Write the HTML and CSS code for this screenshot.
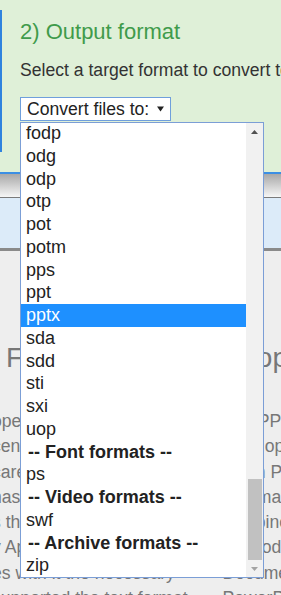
FILE: index.html
```html
<!doctype html>
<html>
    <head>
        <meta charset="utf-8">
        <link rel="stylesheet" href="styles.css">
    </head>
    <body>
        <div class="page">
            <section class="step">
                <h2>2) Output format</h2>
                <p class="hint">Select a target format to convert to:</p>
                <div class="picker">
                    <span>Convert files to:</span>
                    <svg width="7" height="6" viewBox="0 0 7 6"><polygon points="0,0.5 7,0.5 3.5,5.5" fill="#222"/></svg>
                </div>
            </section>
            <div class="toolbar"></div>
            <div class="infobar"></div>
            <div class="article">
                <div class="col col-left">
                    <h3>PPTX Files</h3>
                    <p>open Office XML format<br>cent versions of the<br>care of slides and<br>has replaced the PPT<br>s the older binary file<br>y Apple Keynote also<br>es with it the necessary<br>supported the text format</p>
                </div>
                <div class="col col-right">
                    <h3>Adoption</h3>
                    <p>The PPTX format was<br>is an open standard<br>Open PowerPoint XML<br>information about the<br>combined with other<br>methods and tools.<br>Document format used<br>PowerPoint since 2007.</p>
                </div>
            </div>

            <div class="dropdown">
                <ul class="options">
                    <li>fodp</li>
                    <li>odg</li>
                    <li>odp</li>
                    <li>otp</li>
                    <li>pot</li>
                    <li>potm</li>
                    <li>pps</li>
                    <li>ppt</li>
                    <li class="selected">pptx</li>
                    <li>sda</li>
                    <li>sdd</li>
                    <li>sti</li>
                    <li>sxi</li>
                    <li>uop</li>
                    <li class="group">-- Font formats --</li>
                    <li>ps</li>
                    <li class="group">-- Video formats --</li>
                    <li>swf</li>
                    <li class="group">-- Archive formats --</li>
                    <li>zip</li>
                </ul>
                <div class="scrollbar">
                    <div class="sb-btn">
                        <svg width="7" height="4" viewBox="0 0 7 4"><polygon points="0,4 3.5,0 7,4" fill="#505050"/></svg>
                    </div>
                    <div class="sb-track"><div class="sb-thumb"></div></div>
                    <div class="sb-btn">
                        <svg width="7" height="4" viewBox="0 0 7 4"><polygon points="0,0 7,0 3.5,4" fill="#a3a3a3"/></svg>
                    </div>
                </div>
            </div>
        </div>
    </body>
</html>
```

FILE: styles.css
```css
*{
    margin: 0;
    padding: 0;
    box-sizing: border-box;
}
body{
    background: #eee;
    font-family: "Liberation Sans", Arial, sans-serif;
    overflow: hidden;
}
.page{
    position: relative;
    width: 281px;
    height: 595px;
    overflow: hidden;
}

/* green step panel */
.step{
    position: relative;
    height: 174px;
    padding: 19px 0 0 20px;
    background: #dff0d8;
    border-bottom: 2px solid #3b8fe4;
}
.step::before{
    content: "";
    position: absolute;
    left: 0;
    top: 10px;
    width: 2px;
    height: 142px;
    background: #2f83de;
}
.step h2{
    font-size: 22px;
    line-height: 25px;
    font-weight: normal;
    color: #3f9b4b;
}
.hint{
    margin-top: 16px;
    font-size: 17.6px;
    line-height: 20px;
    color: #333;
    white-space: nowrap;
}
.picker{
    display: flex;
    align-items: center;
    gap: 8px;
    margin-top: 17px;
    width: 151px;
    height: 24px;
    padding-left: 6px;
    background: #fff;
    border: 1px solid #6f9fdc;
    font-size: 17.6px;
    color: #222;
}

/* bars under the panel */
.toolbar{
    height: 24px;
    background: linear-gradient(#a8a8a8, #f6f6f6);
    border-bottom: 1px solid #7a7a7a;
}
.infobar{
    height: 53px;
    background: #dcebf9;
    border-bottom: 3px solid #8a8a8a;
}

/* text behind the dropdown */
.article{
    display: flex;
    gap: 35px;
    padding-top: 92px;
}
.col-left{
    flex: 0 0 190px;
    margin-left: -8px;
}
.col-right{
    flex: 0 0 auto;
}
.col h3{
    font-size: 28px;
    line-height: 30px;
    font-weight: normal;
    color: #777;
    white-space: nowrap;
}
.col-left h3{
    margin-left: -67px;
}
.col p{
    margin-top: 36px;
    font-size: 17.6px;
    line-height: 25.3px;
    color: #777;
    white-space: nowrap;
}

/* open select list */
.dropdown{
    position: absolute;
    left: 20px;
    top: 122px;
    width: 244px;
    height: 456px;
    display: flex;
    background: #fff;
    border: 1px solid #7b9ed6;
}
.options{
    flex: 1;
    display: flex;
    flex-direction: column;
    justify-content: flex-end;
    overflow: hidden;
    list-style: none;
}
.options li{
    flex: 0 0 22.75px;
    line-height: 22.75px;
    padding-left: 5px;
    font-size: 18px;
    color: #222;
    white-space: nowrap;
}
.options .group{
    padding-left: 7px;
    font-weight: bold;
}
.options .selected{
    background: #1e90ff;
    color: #fff;
}
.scrollbar{
    width: 17px;
    display: flex;
    flex-direction: column;
    background: #f1f1f1;
}
.sb-btn{
    height: 17px;
    display: flex;
    align-items: center;
    justify-content: center;
}
.sb-btn svg{
    display: block;
}
.sb-track{
    flex: 1;
    display: flex;
    flex-direction: column;
    justify-content: flex-end;
}
.sb-thumb{
    height: 81px;
    margin: 0 1px 0 2px;
    background: #c1c1c1;
}
```
